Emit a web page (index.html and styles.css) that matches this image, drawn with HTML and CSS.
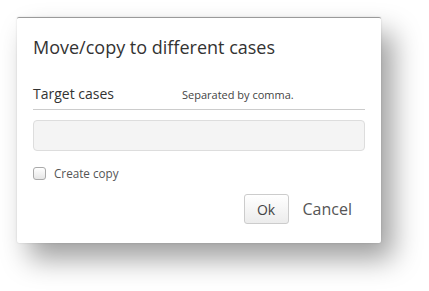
FILE: index.html
```html
<!DOCTYPE html>
<html>
<head>
<meta charset="utf-8">
<link rel="stylesheet" href="styles.css">
</head>
<body>
<div class="dialog">
  <h1 class="title">Move/copy to different cases</h1>
  <div class="field-head">
    <span class="label">Target cases</span>
    <span class="hint">Separated by comma.</span>
  </div>
  <div class="input"></div>
  <label class="check"><span class="box"></span><span>Create copy</span></label>
  <div class="actions">
    <button class="btn">Ok</button>
    <span class="cancel">Cancel</span>
  </div>
</div>
</body>
</html>
```
FILE: styles.css
```css
html, body { margin: 0; padding: 0; background: #fff; }
body {
  width: 429px; height: 291px; overflow: hidden;
  font-family: "Open Sans", "Noto Sans", sans-serif;
  color: #333;
  padding: 17px 0 0 17px;
  box-sizing: border-box;
}
.dialog {
  width: 364px; height: 226px;
  box-sizing: border-box;
  background: #fff;
  border-top: 1px solid #9a9a9a;
  border-radius: 2px;
  box-shadow: 12px 16px 28px rgba(0,0,0,0.38), 0 0 2px rgba(0,0,0,0.15);
  padding: 0 16px;
  display: flex; flex-direction: column;
}
.title {
  margin: 17px 0 0 0;
  font-size: 18px; font-weight: 400; line-height: 24px;
  color: #333;
}
.field-head {
  margin-top: 25px;
  display: flex; align-items: baseline;
  border-bottom: 1px solid #ccc;
  padding-bottom: 5px;
}
.label { font-size: 14px; width: 149px; line-height: 20px; }
.hint { font-size: 11px; color: #444; }
.input {
  margin-top: 10px;
  height: 31px; box-sizing: border-box;
  background: #f4f4f4; border: 1px solid #ddd; border-radius: 4px;
}
.check {
  margin-top: 14px;
  display: flex; align-items: center; gap: 8px;
  font-size: 11.7px; color: #555;
}
.box {
  width: 11px; height: 11px; border: 1px solid #aaa; border-radius: 3px;
  background: linear-gradient(#fff, #e6e6e6);
}
.actions {
  margin-top: 13px;
  display: flex; justify-content: flex-end; align-items: center;
  padding-right: 13px;
}
.btn {
  font-family: inherit; font-size: 14px; color: #444;
  width: 45px; height: 30px;
  background: linear-gradient(#fff, #ececec);
  border: 1px solid #ccc; border-radius: 3px;
  margin-right: 14px; padding: 0;
}
.cancel { font-size: 16px; color: #555; }
```
